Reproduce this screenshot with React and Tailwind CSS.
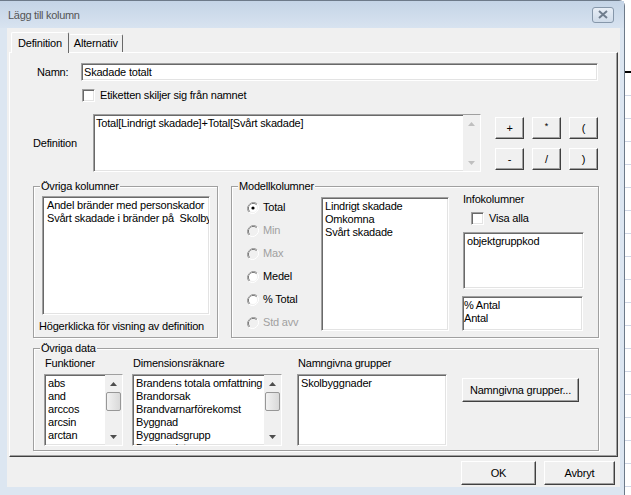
import { useState } from "react";

const sunken =
  "bg-white border border-t-[#a0a0a0] border-l-[#a0a0a0] border-r-white border-b-white shadow-[inset_1px_1px_0_#696969,inset_-1px_-1px_0_#e3e3e3]";
const raised =
  "bg-[#f0f0f0] border border-t-white border-l-white border-r-[#404040] border-b-[#404040] shadow-[inset_-1px_-1px_0_#a0a0a0]";

function Check({ className = "" }) {
  return <span className={`${sunken} block w-[13px] h-[13px] shrink-0 ${className}`} />;
}

function Radio({ checked, disabled, label }) {
  return (
    <div className="flex items-center h-[23px]">
      <svg width="12" height="12" viewBox="0 0 12 12" className="shrink-0">
        <path d="M10.2 1.8A6 6 0 0 0 1.8 10.2" fill="none" stroke="#a0a0a0" strokeWidth="1" />
        <path d="M9.5 2.5A5 5 0 0 0 2.5 9.5" fill="none" stroke="#696969" strokeWidth="1" />
        <path d="M1.8 10.2A6 6 0 0 0 10.2 1.8" fill="none" stroke="#ffffff" strokeWidth="1" />
        <circle cx="6" cy="6" r="4" fill={disabled ? "#f0f0f0" : "#ffffff"} />
        {checked && <circle cx="6" cy="6" r="1.6" fill="#000" />}
      </svg>
      <span className={`ml-[4px] ${disabled ? "text-[#a0a0a0]" : "text-black"}`}>{label}</span>
    </div>
  );
}

function Arrow({ up, color = "#4d4d4d" }) {
  return (
    <svg width="7" height="4" viewBox="0 0 7 4">
      <path d={up ? "M0 4 L3.5 0 L7 4Z" : "M0 0 L3.5 4 L7 0Z"} fill={color} />
    </svg>
  );
}

function ScrollBar({ thumb, disabled }) {
  const c = disabled ? "#bfbfbf" : "#4d4d4d";
  return (
    <div className="w-[17px] h-full bg-[#f0f0f0] flex flex-col items-center shrink-0">
      <div className="h-[17px] w-full flex items-center justify-center">
        <Arrow up color={c} />
      </div>
      <div className="flex-1 w-full">
        {thumb && (
          <div className="mx-[1px] h-[19px] rounded-[2px] border border-[#979797] bg-gradient-to-r from-[#f2f2f2] to-[#d9d9d9]" />
        )}
      </div>
      <div className="h-[17px] w-full flex items-center justify-center">
        <Arrow color={c} />
      </div>
    </div>
  );
}

function ListBox({ items, className = "", scroll, pad = "pl-[3px]" }) {
  return (
    <div className={`${sunken} flex overflow-hidden shrink-0 ${className}`}>
      <div className={`flex-1 overflow-hidden pt-[2px] ${pad} leading-[13px] whitespace-pre`}>
        {items.map((t) => (
          <div key={t}>{t}</div>
        ))}
      </div>
      {scroll && <ScrollBar thumb />}
    </div>
  );
}

function OpButton({ children }) {
  return (
    <button className={`${raised} w-[29px] h-[22px] flex items-center justify-center text-[11px]`}>
      {children}
    </button>
  );
}

function Group({ title, className = "", children }) {
  return (
    <div
      className={`relative shrink-0 border border-[#a0a0a0] shadow-[1px_1px_0_#fff,inset_1px_1px_0_#fff] ${className}`}
    >
      <span className="absolute -top-[7px] left-[6px] px-[1px] bg-[#f0f0f0] leading-[13px]">{title}</span>
      {children}
    </div>
  );
}

export default function App() {
  const [name, setName] = useState("Skadade totalt");

  return (
    <div className="w-[631px] h-[495px] bg-white flex overflow-hidden font-['Liberation_Sans',Arial,sans-serif] text-[11px] tracking-[-0.2px] text-black">
      {/* Dialogfönster */}
      <div className="w-[625px] h-[495px] shrink-0 flex flex-col bg-[#dce6f1] rounded-tr-[6px] border-r border-t border-[#6d7a89]">
        {/* Titelrad */}
        <div className="h-[27px] flex items-center pl-[8px] pr-[10px] bg-gradient-to-b from-[#c4d4e6] to-[#d8e3f0]">
          <span className="text-[11px] text-[#555] tracking-[-0.3px] pt-[1px]">Lägg till kolumn</span>
          <div className="ml-auto w-[22px] h-[16px] rounded-[3px] border border-[#8697aa] bg-gradient-to-b from-[#e8eef6] to-[#cfdbe9] flex items-center justify-center">
            <svg width="10" height="9" viewBox="0 0 10 9">
              <path d="M1 1 L9 8 M9 1 L1 8" stroke="#6f7d8d" strokeWidth="2" />
            </svg>
          </div>
        </div>

        {/* Klientyta */}
        <div className="flex-1 ml-[7px] mr-[4px] mb-[8px] bg-[#f0f0f0] flex flex-col px-[2px] pt-[4px]">
          {/* Flikar */}
          <div className="flex items-end h-[20px] pl-[2px] relative z-10">
            <div className="h-[21px] px-[6px] -mb-[1px] bg-[#f0f0f0] border border-b-0 border-t-white border-l-white border-r-[#696969] rounded-t-[2px] flex items-center">
              Definition
            </div>
            <div className="h-[18px] px-[4px] border border-b-0 border-t-white border-l-[#f0f0f0] border-r-[#696969] rounded-t-[2px] flex items-center">
              Alternativ
            </div>
          </div>

          {/* Flikinnehåll */}
          <div className="h-[405px] border border-t-white border-l-white border-r-[#404040] border-b-[#404040] shadow-[inset_-1px_-1px_0_#a0a0a0] flex flex-col">
            {/* Namn */}
            <div className="flex items-center mt-[10px] h-[18px]">
              <span className="ml-[27px] w-[44px]">Namn:</span>
              <input
                value={name}
                onChange={(e) => setName(e.target.value)}
                className={`${sunken} w-[517px] h-[18px] px-[2px] text-[11px] outline-none`}
              />
            </div>

            <div className="flex items-center mt-[8px] ml-[72px] h-[13px]">
              <Check />
              <span className="ml-[5px]">Etiketten skiljer sig från namnet</span>
            </div>

            {/* Definition */}
            <div className="flex mt-[12px] h-[58px]">
              <span className="ml-[23px] w-[60px] self-center">Definition</span>
              <div className={`${sunken} w-[388px] h-[58px] flex`}>
                <div className="flex-1 pl-[2px]">Total[Lindrigt skadade]+Total[Svårt skadade]</div>
                <ScrollBar disabled />
              </div>
              <div className="ml-[14px] mt-[3px] grid grid-cols-3 gap-x-[8px] gap-y-[9px] h-[53px]">
                <OpButton>+</OpButton>
                <OpButton>
                  <span className="text-[9px] -mt-[3px]">*</span>
                </OpButton>
                <OpButton>(</OpButton>
                <OpButton>-</OpButton>
                <OpButton>/</OpButton>
                <OpButton>)</OpButton>
              </div>
            </div>

            {/* Övriga kolumner / Modellkolumner */}
            <div className="flex mt-[14px] ml-[23px]">
              <Group title="Övriga kolumner" className="w-[185px] h-[152px] pl-[8px] pt-[9px]">
                <ListBox
                  className="w-[168px] h-[119px]"
                  pad="pl-[4px]"
                  items={["Andel bränder med personskador", "Svårt skadade i bränder på  Skolbyggnader"]}
                />
                <div className="mt-[5px] -ml-[3px] leading-[13px] whitespace-nowrap">
                  Högerklicka för visning av definition
                </div>
              </Group>

              <Group title="Modellkolumner" className="ml-[13px] w-[368px] h-[152px] flex pl-[15px]">
                <div className="w-[74px] pt-[9px]">
                  <Radio checked label="Total" />
                  <Radio disabled label="Min" />
                  <Radio disabled label="Max" />
                  <Radio label="Medel" />
                  <Radio label="% Total" />
                  <Radio disabled label="Std avv" />
                </div>
                <ListBox
                  className="w-[128px] h-[134px] mt-[10px]"
                  items={["Lindrigt skadade", "Omkomna", "Svårt skadade"]}
                />
                <div className="ml-[14px] w-[121px] flex flex-col">
                  <div className="mt-[6px] leading-[13px]">Infokolumner</div>
                  <div className="flex items-center mt-[6px] ml-[8px] h-[13px]">
                    <Check />
                    <span className="ml-[5px]">Visa alla</span>
                  </div>
                  <ListBox className="w-[121px] h-[57px] mt-[7px]" items={["objektgruppkod"]} />
                  <ListBox
                    className="w-[121px] h-[35px] mt-[7px] -ml-[1px]"
                    pad="pl-[1px]"
                    items={["% Antal", "Antal"]}
                  />
                </div>
              </Group>
            </div>

            {/* Övriga data */}
            <Group title="Övriga data" className="mt-[10px] ml-[23px] w-[566px] h-[103px] flex pl-[10px] pt-[8px]">
              <div className="w-[79px]">
                <div className="ml-[1px] leading-[13px]">Funktioner</div>
                <ListBox
                  className="w-[79px] h-[72px] mt-[4px]"
                  scroll
                  items={["abs", "and", "arccos", "arcsin", "arctan", "avg"]}
                />
              </div>
              <div className="ml-[9px] w-[150px]">
                <div className="ml-[1px] leading-[13px]">Dimensionsräknare</div>
                <ListBox
                  className="w-[150px] h-[72px] mt-[4px]"
                  scroll
                  items={[
                    "Brandens totala omfattning",
                    "Brandorsak",
                    "Brandvarnarförekomst",
                    "Byggnad",
                    "Byggnadsgrupp",
                    "Byggnadstyp",
                  ]}
                />
              </div>
              <div className="ml-[15px] w-[150px]">
                <div className="ml-[1px] leading-[13px]">Namngivna grupper</div>
                <ListBox className="w-[150px] h-[72px] mt-[4px]" items={["Skolbyggnader"]} />
              </div>
              <button className={`${raised} ml-[15px] mt-[21px] w-[117px] h-[24px] text-[11px]`}>
                Namngivna grupper...
              </button>
            </Group>
          </div>

          {/* Knappar */}
          <div className="flex justify-end gap-[8px] mt-[4px] pr-[3px]">
            <button className={`${raised} w-[75px] h-[24px] text-[11px]`}>OK</button>
            <button className={`${raised} w-[71px] h-[24px] text-[11px]`}>Avbryt</button>
          </div>
        </div>
      </div>

      {/* Kalkylblad bakom dialogen */}
      <div className="flex-1 flex flex-col pt-[71px]">
        <div className="h-[2px] bg-black" />
        {[0, 1, 2, 3, 4, 5, 6, 7, 8, 9, 10, 11, 12, 13, 14, 15, 16, 17].map((i) => (
          <div key={i} className="h-[23px] border-b border-[#d0d7e5]" />
        ))}
      </div>
    </div>
  );
}
